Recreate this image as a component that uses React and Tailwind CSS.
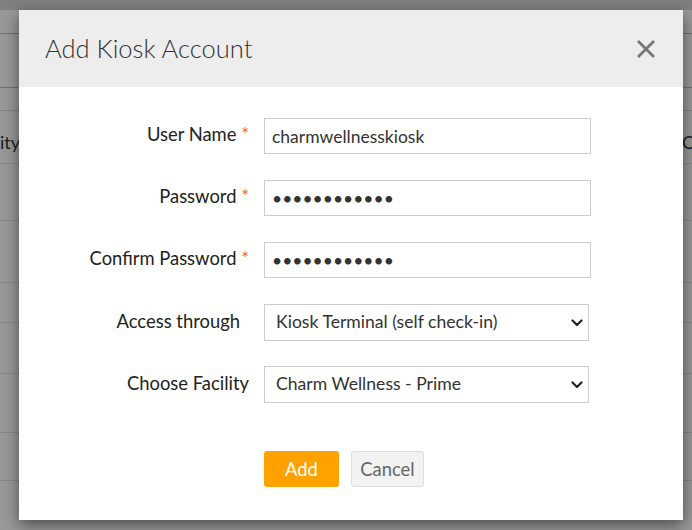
const rows = [
  { label: "User Name", required: true, type: "text", value: "charmwellnesskiosk" },
  { label: "Password", required: true, type: "password", value: "kioskpass123" },
  { label: "Confirm Password", required: true, type: "password", value: "kioskpass123" },
]

const selects = [
  { label: "Access through", pad: "pr-[9px]", value: "Kiosk Terminal (self check-in)" },
  { label: "Choose Facility", pad: "pr-[-2px]", value: "Charm Wellness - Prime" },
]

function Chevron() {
  return (
    <svg className="pointer-events-none absolute right-[6px] top-1/2 -translate-y-1/2" width="12" height="8" viewBox="0 0 12 8" fill="none">
      <path d="M1.5 1.5 6 6l4.5-4.5" stroke="#222" strokeWidth="2.2" strokeLinecap="round" strokeLinejoin="round" />
    </svg>
  )
}

function CloseIcon() {
  return (
    <svg width="18" height="18" viewBox="0 0 18 18" fill="none">
      <path d="M1 1l16 16M17 1L1 17" stroke="#777" strokeWidth="2.8" />
    </svg>
  )
}

function Background() {
  const lines = [163, 220, 282, 322, 373, 432, 480]
  return (
    <div className="relative h-full w-full bg-white">
      <div className="h-[10px] bg-[#d6d6d6]" />
      <div className="absolute left-[-40px] right-[-40px] top-[33px] h-[55px] border border-[#9fc3e6] bg-white px-[20px]">
        <span className="absolute left-[-4px] top-[15px] text-[16px] text-[#888]">form</span>
      </div>
      <div className="absolute left-0 right-0 top-[110px] h-[53px] border-t border-[#ddd]">
        <span className="absolute left-[-35px] top-[18px] text-[18px] text-[#333]">Facility</span>
        <span className="absolute right-[-12px] top-[18px] text-[18px] text-[#333]">Co</span>
      </div>
      {lines.map((y) => (
        <div key={y} className="absolute left-0 right-0 border-t border-[#e2e2e2]" style={{ top: y }} />
      ))}
    </div>
  )
}

export default function App() {
  return (
    <div className="relative h-[530px] w-[692px] overflow-hidden font-['Lato','Liberation_Sans',sans-serif]">
      <Background />
      <div className="absolute inset-0 bg-black/40" />

      <div className="absolute left-[19px] top-[10px] h-[510px] w-[664px] bg-white shadow-[0_5px_15px_rgba(0,0,0,0.5)]">
        <div className="flex h-[77px] items-center justify-between bg-[#ededed] pl-[26px] pr-[28px]">
          <h2 className="text-[25.5px] font-light leading-none text-[#333]">Add Kiosk Account</h2>
          <CloseIcon />
        </div>

        <div className="flex flex-col pt-[31px]">
          {rows.map((r) => (
            <div key={r.label} className="mb-[26px] flex items-center">
              <label className="w-[230px] -translate-y-[1px] text-right text-[18.4px] text-[#222]">
                {r.label} {r.required && <span className="text-[#ff6a2b]">*</span>}
              </label>
              <input
                readOnly
                type={r.type}
                value={r.value}
                className="ml-[15px] h-[36px] w-[327px] border border-[#ccc] bg-white px-[7px] text-[17.5px] text-[#333] outline-none"
              />
            </div>
          ))}

          {selects.map((s) => (
            <div key={s.label} className="mb-[25px] flex items-center">
              <label className={`w-[230px] -translate-y-[1px] text-right text-[18.4px] text-[#222] ${s.pad}`}>{s.label}</label>
              <div className="relative ml-[15px] h-[37px] w-[325px]">
                <select
                  value={s.value}
                  onChange={() => {}}
                  className="h-full w-full appearance-none border border-[#ccc] bg-white pl-[11px] text-[17.6px] text-[#333] outline-none"
                >
                  <option>{s.value}</option>
                </select>
                <Chevron />
              </div>
            </div>
          ))}

          <div className="mt-[23px] flex gap-[12px] pl-[245px]">
            <button className="h-[36px] w-[75px] rounded-[3px] bg-[#ffa200] pt-px text-[18.4px] text-white">Add</button>
            <button className="h-[36px] w-[73px] rounded-[3px] border border-[#ddd] bg-[#f2f2f2] pt-px text-[18.4px] text-[#666]">Cancel</button>
          </div>
        </div>
      </div>
    </div>
  )
}
